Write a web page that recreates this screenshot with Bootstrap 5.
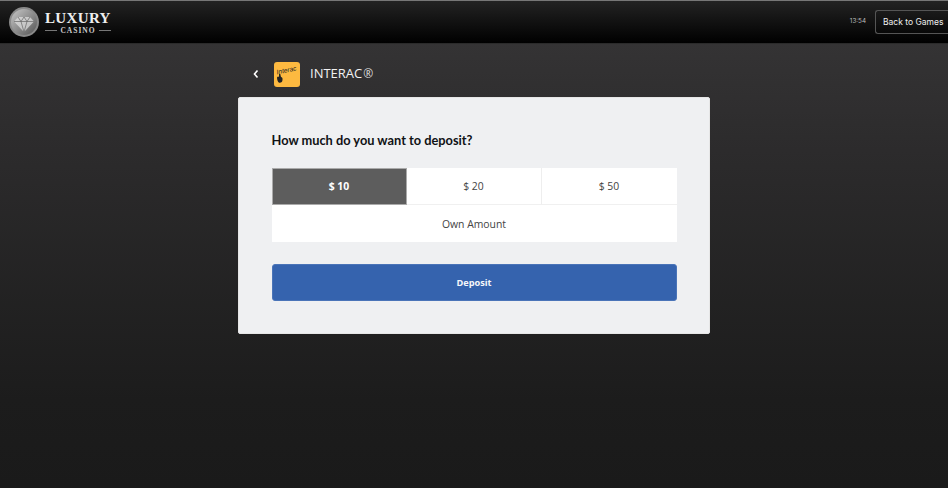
<!DOCTYPE html>
<html lang="en"><head><meta charset="utf-8"><title>Deposit</title>
<link href="https://cdn.jsdelivr.net/npm/bootstrap@5.3.0/dist/css/bootstrap.min.css" rel="stylesheet">
<style>
html,body{height:100%}
body{background:linear-gradient(180deg,#343334 44px,#2c2b2c 150px,#1c1c1c 400px,#1a1a1a 100%);font-family:"Open Sans",sans-serif;overflow:hidden}
.topbar{height:44px;background:linear-gradient(180deg,#232323 0,#000 100%);border-top:1px solid #777;border-bottom:1px solid #2a2a2a}
.emblem{margin-left:9px;width:30px;height:30px}
.brand-box{margin-left:6px;width:66px}
.brand-a{font-family:"Liberation Serif",serif;font-weight:700;font-size:15px;line-height:15px;letter-spacing:.35px;color:#eee;white-space:nowrap;margin-top:2px}
.brand-b{font-family:"Liberation Serif",serif;font-weight:700;font-size:7.500px;line-height:9px;letter-spacing:1px;color:#ccc;gap:3px}
.brand-b i{display:block;height:1px;width:12px;background:#777}
.clock{font-family:Inter,sans-serif;font-size:6.300px;color:#bbb;margin-right:9px}
.back-btn{font-family:Inter,sans-serif;font-size:8.500px;line-height:1;color:#eee;width:73px;height:24px;border:1px solid #555;border-right:0;border-radius:3px 0 0 3px;padding:0 0 0 7px;white-space:nowrap;overflow:hidden;background:transparent}
.stage{width:472px;margin:0 auto}
.head-row{height:53px;padding-top:7px;color:#f2f2f2;font-size:13px}
.head-row small{font-size:12px;margin-left:1px;color:#ddd}
.chev{width:8px;height:10px;margin:0 14px 1px 14px}
.logo-i{width:26px;height:25px;border-radius:3px;background:#fdb940;margin-right:10px;flex:none}
.panel{background:#eff0f2;border:1px solid #e6e6e6;border-radius:2px;height:237px;padding:34px 32.500px 0}
.ask{font-family:Lato,sans-serif;font-size:12.800px;line-height:17px;font-weight:700;color:#101215;margin-bottom:19px}
.amounts{display:grid;grid-template-columns:repeat(3,1fr);background:#fff;height:74px;grid-template-rows:37px 37px;border-radius:1px}
.amt{font-size:10.400px;color:#444;background:#fff;border-bottom:1px solid #f0f0f0;border-right:1px solid #eee;padding-top:1px}
.amt.last-c{border-right:0}
.amt.on{background:#5d5d5d;color:#fff;font-weight:700;border:1px solid #aaa}
.amt.wide{grid-column:1/4;border:0;padding-top:2px}
.pay{height:37px;width:100%;margin-top:22px;background:#3563ae;border:1px solid #4a74b8;border-radius:3px;color:#f4f6fa;font-size:9.200px;font-weight:700;padding:0}
.pay:hover{background:#3563ae;color:#fff}
</style></head><body>
<header class="topbar d-flex align-items-center">
<svg class="emblem" viewBox="0 0 30 30" aria-hidden="true">
<defs><linearGradient id="g" x1="0" y1="0" x2="1" y2="1"><stop offset="0" stop-color="#c8c8c8"/><stop offset="1" stop-color="#555"/></linearGradient></defs>
<circle cx="15" cy="15" r="15" fill="#8a8a8a"/><circle cx="15" cy="15" r="13" fill="url(#g)"/>
<path d="M9 10h12l4 4.500L15 25 5 14.500z" fill="#ddd" opacity=".75"/>
<path d="M5 14.500h20M9 10l3 4.500 3 10.500 3-10.500 3-4.500M12 14.500 15 10l3 4.500" fill="none" stroke="#666" stroke-width=".7"/></svg>
<div class="brand-box">
<div class="brand-a">LUXURY</div>
<div class="brand-b d-flex align-items-center justify-content-center"><i></i><span>CASINO</span><i></i></div>
</div>
<div class="ms-auto d-flex align-items-center">
<span class="clock">13:54</span>
<button class="back-btn text-start" type="button">Back to Games</button>
</div>
</header>
<main class="stage">
<div class="head-row d-flex align-items-center">
<svg class="chev" viewBox="0 0 8 10" aria-hidden="true"><path d="M5.500 1.500 2.500 5l3 3.500" fill="none" stroke="#fff" stroke-width="1.600"/></svg>
<svg class="logo-i" viewBox="0 0 26 25" aria-hidden="true"><path d="M3 15.500c.8-1.500 1.800-1 2-.3l0-3c.8-1 1.500-.3 1.500.8l.5 2c1 0 1.800 1 1.500 2.800 0 2-1 3-2.800 3s-2.500-2.800-2.700-5.300z" fill="#222"/><text x="3" y="12.500" font-family="Liberation Sans,sans-serif" font-size="6.600" font-style="italic" fill="#222" transform="rotate(-12 3 12.500)">Interac</text></svg>
<span>INTERAC<small>®</small></span>
</div>
<section class="panel">
<h1 class="ask">How much do you want to deposit?</h1>
<div class="amounts">
<div class="amt on d-flex align-items-center justify-content-center">$ 10</div>
<div class="amt d-flex align-items-center justify-content-center">$ 20</div>
<div class="amt last-c d-flex align-items-center justify-content-center">$ 50</div>
<div class="amt wide d-flex align-items-center justify-content-center">Own Amount</div>
</div>
<button class="btn pay" type="button">Deposit</button>
</section>
</main>
<script src="https://cdn.jsdelivr.net/npm/bootstrap@5.3.0/dist/js/bootstrap.bundle.min.js"></script>
</body></html>
